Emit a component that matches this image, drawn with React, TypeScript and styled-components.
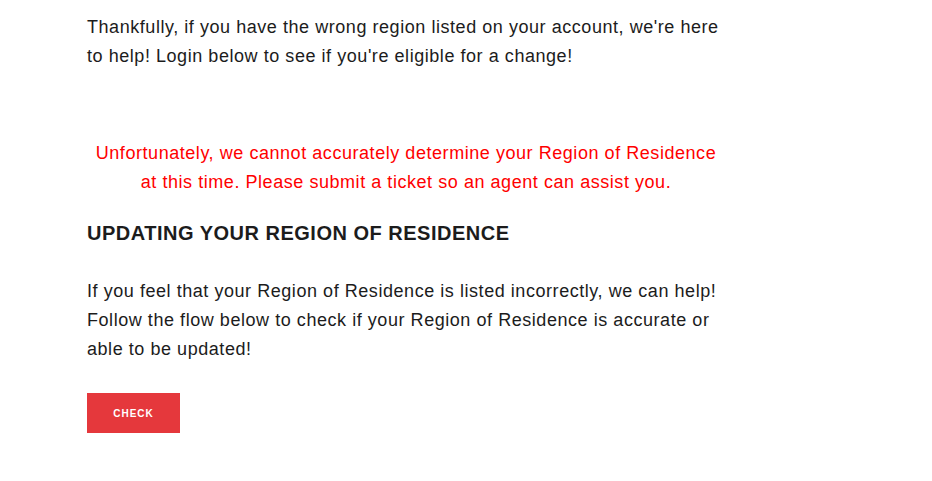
import React from 'react';
import styled, { createGlobalStyle } from 'styled-components';

const GlobalStyle = createGlobalStyle`
  body {
    margin: 0;
    background: #ffffff;
    font-family: "Liberation Sans", Arial, sans-serif;
    color: #1c1c1c;
  }
`;

const Page = styled.div`
  padding: 13px 0 0 87px;
`;

const Column = styled.div`
  width: 638px;
`;

const Text = styled.p`
  margin: 0;
  font-size: 18px;
  line-height: 29px;
  letter-spacing: 0.55px;
`;

const Notice = styled(Text)`
  margin-top: 68px;
  padding: 0 4px;
  color: #ff0000;
  text-align: center;
`;

const Heading = styled.h2`
  margin: 22px 0 0;
  font-size: 20px;
  line-height: 28px;
  font-weight: 700;
  text-transform: uppercase;
  letter-spacing: 0.5px;
  color: #1c1c1c;
`;

const Body = styled(Text)`
  margin-top: 30px;
`;

const CheckButton = styled.button`
  display: block;
  margin-top: 29px;
  width: 93px;
  height: 40px;
  border: none;
  border-radius: 0;
  background: #e5383c;
  color: #ffffff;
  font-family: "Liberation Sans", Arial, sans-serif;
  font-size: 10px;
  font-weight: 700;
  letter-spacing: 1px;
  text-transform: uppercase;
  cursor: pointer;
`;

const App: React.FC = () => {
  return (
    <>
      <GlobalStyle />
      <Page>
        <Column>
          <Text>
            Thankfully, if you have the wrong region listed on your account, we're here
            to help! Login below to see if you're eligible for a change!
          </Text>
          <Notice>
            Unfortunately, we cannot accurately determine your Region of Residence
            at this time. Please submit a ticket so an agent can assist you.
          </Notice>
          <Heading>Updating your Region of Residence</Heading>
          <Body>
            If you feel that your Region of Residence is listed incorrectly, we can help!
            Follow the flow below to check if your Region of Residence is accurate or
            able to be updated!
          </Body>
          <CheckButton>Check</CheckButton>
        </Column>
      </Page>
    </>
  );
};

export default App;
